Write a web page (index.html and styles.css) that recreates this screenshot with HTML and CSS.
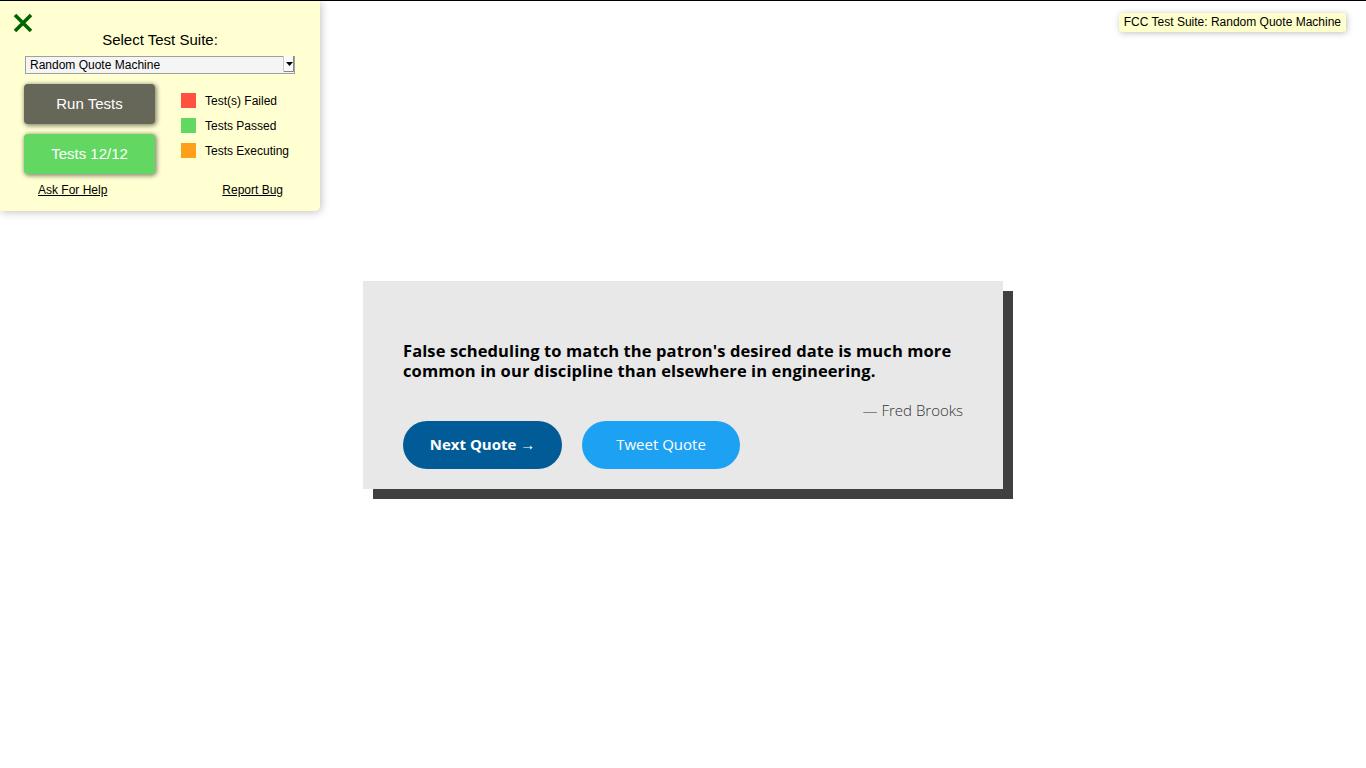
FILE: index.html
```html
<!DOCTYPE html>
<html>
<head>
<meta charset="utf-8">
<link rel="stylesheet" href="styles.css">
</head>
<body>
<div class="panel">
  <div class="panel-head">
    <svg class="close" width="20" height="20" viewBox="0 0 20 20"><path d="M2 2 L18 18 M18 2 L2 18" stroke="#006400" stroke-width="3.6" stroke-linecap="butt"/></svg>
    <div class="title">Select Test Suite:</div>
  </div>
  <div class="select-wrap">
    <select class="suite"><option>Random Quote Machine</option></select>
    <span class="arrow"><svg width="7" height="4" viewBox="0 0 7 4"><path d="M0 0 H7 L3.5 4 Z" fill="#000"/></svg></span>
  </div>
  <div class="mid">
    <div class="btns">
      <button class="run">Run Tests</button>
      <button class="passed">Tests 12/12</button>
    </div>
    <ul class="legend">
      <li><span class="sq red"></span>Test(s) Failed</li>
      <li><span class="sq green"></span>Tests Passed</li>
      <li><span class="sq orange"></span>Tests Executing</li>
    </ul>
  </div>
  <div class="links">
    <a href="#">Ask For Help</a>
    <a href="#">Report Bug</a>
  </div>
</div>
<div class="tip">FCC Test Suite: Random Quote Machine</div>

<main class="stage">
  <div class="card">
    <p class="quote">False scheduling to match the patron's desired date is much more common in our discipline than elsewhere in engineering.</p>
    <p class="author">— Fred Brooks</p>
    <div class="actions">
      <button class="next">Next Quote →</button>
      <button class="tweet">Tweet Quote</button>
    </div>
  </div>
</main>
</body>
</html>
```
FILE: styles.css
```css
html, body {
  margin: 0;
  padding: 0;
}
body {
  border-top: 1px solid #000;
  height: 767px;
  font-family: "Liberation Sans", Arial, sans-serif;
  background: #fff;
  position: relative;
  overflow: hidden;
}
.panel {
  position: absolute;
  top: 0;
  left: 0;
  width: 320px;
  height: 210px;
  background: #ffffd2;
  border-radius: 0 0 5px 0;
  box-shadow: 1px 1px 8px rgba(0,0,0,0.25);
  box-sizing: border-box;
}
.panel-head {
  position: relative;
  height: 54px;
}
.close {
  position: absolute;
  left: 13px;
  top: 12px;
}
.title {
  position: absolute;
  top: 30px;
  left: 0;
  right: 0;
  text-align: center;
  font-size: 15px;
  color: #000;
}
.select-wrap {
  position: relative;
  margin: 0 0 0 25px;
  width: 270px;
  height: 18px;
}
.suite {
  appearance: none;
  -webkit-appearance: none;
  width: 270px;
  height: 18px;
  border: 1px solid #a0a0a0;
  background: #f5f5f5;
  font-family: "Liberation Sans", Arial, sans-serif;
  font-size: 12px;
  padding: 0 0 0 4px;
  margin: 0;
  color: #000;
  border-radius: 0;
  box-sizing: border-box;
}
.arrow {
  position: absolute;
  right: 1px;
  top: 1px;
  width: 10px;
  height: 16px;
  background: #fafafa;
  border-left: 1px solid #c8c8c8;
  box-shadow: inset -1px -1px 0 #888;
  display: flex;
  align-items: center;
  justify-content: center;
}
.mid {
  display: flex;
  margin-top: 11px;
  padding-left: 24px;
}
.btns {
  display: flex;
  flex-direction: column;
  gap: 10px;
}
.btns button {
  width: 131px;
  height: 40px;
  border: none;
  border-radius: 4px;
  color: #fff;
  font-family: "Liberation Sans", Arial, sans-serif;
  font-size: 15px;
  box-shadow: 1px 1px 4px 1px rgba(0,0,0,0.45);
  padding: 0 0 2px 0;
}
.run { background: #666659; }
.passed { background: #62d862; }
.legend {
  list-style: none;
  margin: 9px 0 0 26px;
  padding: 0;
}
.legend li {
  display: flex;
  align-items: center;
  height: 15px;
  margin-bottom: 10px;
  font-size: 12px;
  color: #000;
}
.sq {
  width: 15px;
  height: 15px;
  margin-right: 9px;
}
.red { background: #ff5040; }
.green { background: #62d862; }
.orange { background: #ffa01a; }
.links {
  display: flex;
  justify-content: space-between;
  padding: 0 37px 0 38px;
  margin-top: 9px;
}
.links a {
  color: #000;
  font-size: 12px;
}
.tip {
  position: absolute;
  top: 12px;
  right: 20px;
  background: #ffffcc;
  font-size: 12px;
  color: #000;
  padding: 2px 5px 3px 5px;
  border-radius: 3px;
  box-shadow: 1px 1px 6px rgba(0,0,0,0.25);
}
.stage {
  height: 767px;
  display: flex;
  align-items: center;
  justify-content: center;
}
.card {
  width: 640px;
  box-sizing: border-box;
  background: #e8e8e8;
  box-shadow: 10px 10px 0 #404040;
  padding: 60px 40px 20px 40px;
  margin-top: 1px;
  font-family: "Open Sans", sans-serif;
}
.quote {
  margin: 0;
  font-size: 16.5px;
  font-weight: 700;
  line-height: 20px;
  color: #000;
  letter-spacing: 0.1px;
}
.author {
  margin: 19px 0 0 0;
  text-align: right;
  font-size: 15px;
  font-weight: 300;
  color: #333;
  line-height: 20px;
}
.actions {
  display: flex;
  gap: 20px;
  margin-top: 1px;
}
.actions button {
  height: 48px;
  border: none;
  border-radius: 24px;
  color: #fff;
  font-family: "Open Sans", sans-serif;
  font-size: 15px;
  padding: 0 0 2px 0;
}
.next {
  width: 159px;
  background: #005b96;
  font-weight: 700;
}
.tweet {
  width: 158px;
  background: #1da1f2;
  font-weight: 400;
}
```
